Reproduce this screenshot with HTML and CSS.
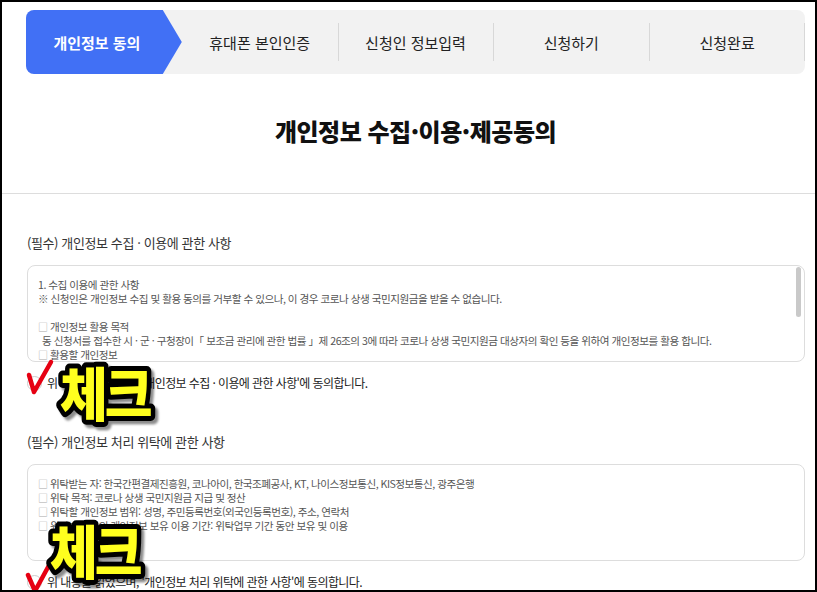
FILE: index.html
```html
<!DOCTYPE html>
<html lang="ko">
<head>
  <meta charset="UTF-8" />
  <meta name="viewport" content="width=device-width, initial-scale=1.0"/>
  <title>개인정보 수집·이용·제공동의</title>
  <link rel="stylesheet" href="styles.css">
</head>
<body>
  <div class="page">
    <div class="head">
      <ol class="steps">
        <li class="step active">개인정보 동의</li>
        <li class="step">휴대폰 본인인증</li>
        <li class="step sep">신청인 정보입력</li>
        <li class="step sep">신청하기</li>
        <li class="step sep last">신청완료</li>
      </ol>
      <h1 class="title">개인정보 수집·이용·제공동의</h1>
    </div>

    <div class="terms">
      <h2 class="terms-label">(필수) 개인정보 수집 · 이용에 관한 사항</h2>
      <div class="terms-box scroll">
        <p>1. 수집 이용에 관한 사항</p>
        <p>※ 신청인은 개인정보 수집 및 활용 동의를 거부할 수 있으나, 이 경우 코로나 상생 국민지원금을 받을 수 없습니다.</p>
        <p>&nbsp;</p>
        <p><span class="box-mark">□</span> 개인정보 활용 목적</p>
        <p class="indent">동 신청서를 접수한 시 · 군 · 구청장이「 보조금 관리에 관한 법률 」제 26조의 3에 따라 코로나 상생 국민지원금 대상자의 확인 등을 위하여 개인정보를 활용 합니다.</p>
        <p><span class="box-mark">□</span> 활용할 개인정보</p>
        <p class="indent">성명, 주민등록번호(외국인등록번호), 주소, 휴대전화번호, 가구원 정보</p>
      </div>
      <label class="agree"><span class="agree-check"></span>위 내용을 읽었으며, '개인정보 수집 · 이용에 관한 사항'에 동의합니다.</label>

      <h2 class="terms-label second">(필수) 개인정보 처리 위탁에 관한 사항</h2>
      <div class="terms-box">
        <p><span class="box-mark">□</span> 위탁받는 자: 한국간편결제진흥원, 코나아이, 한국조폐공사, KT, 나이스정보통신, KIS정보통신, 광주은행</p>
        <p><span class="box-mark">□</span> 위탁 목적: 코로나 상생 국민지원금 지급 및 정산</p>
        <p><span class="box-mark">□</span> 위탁할 개인정보 범위: 성명, 주민등록번호(외국인등록번호), 주소, 연락처</p>
        <p><span class="box-mark">□</span> 위탁받은 자의 개인정보 보유 이용 기간: 위탁업무 기간 동안 보유 및 이용</p>
      </div>
      <label class="agree"><span class="agree-check"></span>위 내용을 읽었으며, '개인정보 처리 위탁에 관한 사항'에 동의합니다.</label>
    </div>

    <!-- annotations drawn over the capture -->
    <svg class="mark mark-v1" width="30" height="36" viewBox="0 0 30 36">
      <path d="M5 16 L10 33 L27 3" />
    </svg>
    <svg class="mark check1" width="120" height="78" viewBox="0 0 120 70" preserveAspectRatio="none">
      <text x="6" y="54">체크</text>
    </svg>
    <svg class="mark mark-v2" width="32" height="38" viewBox="0 0 32 38">
      <path d="M4 20 L11 36 L29 3" />
    </svg>
    <svg class="mark check2" width="120" height="78" viewBox="0 0 120 70" preserveAspectRatio="none">
      <text x="6" y="54">체크</text>
    </svg>
  </div>
</body>
</html>
```

FILE: styles.css
```css
body {
  margin: 0;
  background: #fff;
  color: #222;
  font-family: "Noto Sans CJK KR", "Noto Sans", sans-serif;
}
.page {
  position: relative;
  width: 817px;
  height: 592px;
  box-sizing: border-box;
  border: 2px solid #000;
  overflow: hidden;
}
.head {
  height: 192px;
  box-sizing: border-box;
  padding-top: 8px;
  border-bottom: 1px solid #ddd;
}
.steps {
  list-style: none;
  margin: 0 10px 0 24px;
  padding: 0;
  display: grid;
  grid-template-columns: repeat(5, 1fr);
  height: 64px;
  background: #f2f2f2;
  border-radius: 8px;
}
.step {
  position: relative;
  display: flex;
  align-items: center;
  justify-content: center;
  font-size: 15px;
  color: #222;
}
.step.active {
  padding-right: 14px;
  background: #4170f5;
  color: #fff;
  font-weight: 700;
  border-radius: 8px 0 0 8px;
  clip-path: polygon(0 0, calc(100% - 19px) 0, 100% 50%, calc(100% - 19px) 100%, 0 100%);
}
.step.sep::before {
  content: "";
  position: absolute;
  left: 0;
  top: 13px;
  bottom: 13px;
  border-left: 1px solid #d8d8d8;
}
.step.last::after {
  content: "";
  position: absolute;
  right: 0;
  top: 13px;
  bottom: 13px;
  border-left: 1px solid #d8d8d8;
}
.title {
  margin: 44px 10px 0 24px;
  text-align: center;
  font-size: 24px;
  line-height: 26px;
  font-weight: 900;
  letter-spacing: -0.5px;
  color: #111;
}
.terms {
  padding: 0 10px 0 25px;
}
.terms-label {
  margin: 40px 0 0;
  font-size: 13px;
  line-height: 18px;
  font-weight: 400;
  color: #333;
  letter-spacing: -0.4px;
}
.terms-label.second {
  margin-top: 41px;
}
.terms-box {
  position: relative;
  margin-top: 13px;
  height: 97px;
  box-sizing: border-box;
  padding: 12px 10px;
  border: 1px solid #ddd;
  border-radius: 8px;
  overflow: hidden;
  font-size: 10.6px;
  line-height: 14px;
  color: #555;
  letter-spacing: -0.5px;
}
/* scrollbar thumb of the long box */
.terms-box.scroll::after {
  content: "";
  position: absolute;
  top: 1px;
  right: 3px;
  width: 5px;
  height: 50px;
  background: #c9c9c9;
  border-radius: 3px;
}
.terms-box p {
  margin: 0;
  white-space: nowrap;
}
.terms-box .indent {
  padding-left: 4px;
}
.box-mark {
  color: #aaa;
  font-size: 10px;
}
.agree {
  display: flex;
  align-items: center;
  margin-top: 12px;
  font-size: 12px;
  line-height: 18px;
  color: #222;
  letter-spacing: -0.6px;
}
.agree-check {
  width: 13px;
  height: 13px;
  margin-right: 5px;
  border: 1px solid #ccc;
  border-radius: 50%;
}
.mark {
  position: absolute;
  overflow: visible;
}
.mark path {
  fill: none;
  stroke: #e60012;
  stroke-width: 4.5;
  stroke-linecap: round;
  stroke-linejoin: round;
}
.mark text {
  font-family: "Noto Sans CJK KR", sans-serif;
  font-size: 52px;
  font-weight: 900;
  letter-spacing: -3px;
  fill: #ffff1e;
  stroke: #000;
  stroke-width: 9px;
  stroke-linejoin: round;
  paint-order: stroke;
  filter: drop-shadow(3px 3px 1px rgba(0, 0, 0, 0.45));
}
.mark-v1 { left: 22px; top: 357px; }
.check1 { left: 52px; top: 354px; }
.mark-v2 { left: 22px; top: 553px; }
.check2 { left: 42px; top: 512px; }
```
